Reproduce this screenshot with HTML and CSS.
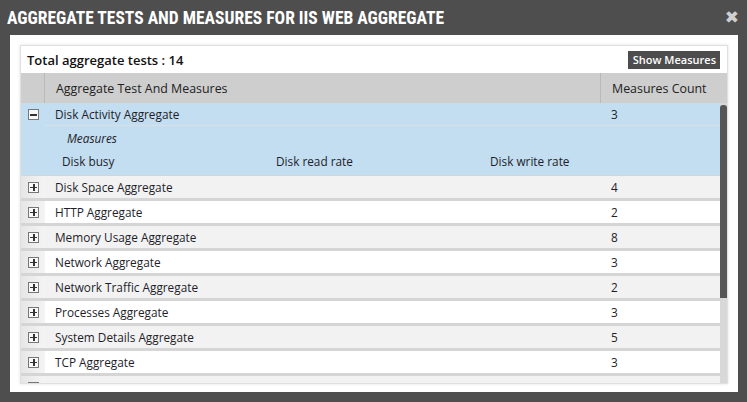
FILE: index.html
```html
<!DOCTYPE html>
<html>
<head>
<meta charset="utf-8">
<link rel="stylesheet" href="styles.css">
</head>
<body>
<div class="dialog">
  <div class="titlebar">
    <span class="title">AGGREGATE TESTS AND MEASURES FOR IIS WEB AGGREGATE</span>
    <span class="close">&#x2716;</span>
  </div>
  <div class="panel">
    <div class="box">
      <div class="toolbar">
        <span class="total">Total aggregate tests : 14</span>
        <span class="btn">Show Measures</span>
      </div>
      <div class="thead">
        <div class="c-icon"></div>
        <div class="c-name">Aggregate Test And Measures</div>
        <div class="c-count">Measures Count</div>
      </div>
      <div class="body">
        <div class="rows">
          <div class="expanded">
            <div class="row exp-head">
              <div class="c-icon"><span class="tog minus"></span></div>
              <div class="c-name">Disk Activity Aggregate</div>
              <div class="c-count">3</div>
            </div>
            <div class="measures-title">Measures</div>
            <div class="measures">
              <span>Disk busy</span>
              <span>Disk read rate</span>
              <span>Disk write rate</span>
            </div>
          </div>
          <div class="row alt"><div class="c-icon"><span class="tog plus"></span></div><div class="c-name">Disk Space Aggregate</div><div class="c-count">4</div></div>
          <div class="row"><div class="c-icon"><span class="tog plus"></span></div><div class="c-name">HTTP Aggregate</div><div class="c-count">2</div></div>
          <div class="row alt"><div class="c-icon"><span class="tog plus"></span></div><div class="c-name">Memory Usage Aggregate</div><div class="c-count">8</div></div>
          <div class="row"><div class="c-icon"><span class="tog plus"></span></div><div class="c-name">Network Aggregate</div><div class="c-count">3</div></div>
          <div class="row alt"><div class="c-icon"><span class="tog plus"></span></div><div class="c-name">Network Traffic Aggregate</div><div class="c-count">2</div></div>
          <div class="row"><div class="c-icon"><span class="tog plus"></span></div><div class="c-name">Processes Aggregate</div><div class="c-count">3</div></div>
          <div class="row alt"><div class="c-icon"><span class="tog plus"></span></div><div class="c-name">System Details Aggregate</div><div class="c-count">5</div></div>
          <div class="row"><div class="c-icon"><span class="tog plus"></span></div><div class="c-name">TCP Aggregate</div><div class="c-count">3</div></div>
          <div class="row alt"><div class="c-icon"><span class="tog plus"></span></div><div class="c-name"></div><div class="c-count"></div></div>
        </div>
        <div class="scroll"><div class="thumb"></div></div>
      </div>
    </div>
  </div>
</div>
</body>
</html>
```
FILE: styles.css
```css
* { box-sizing: border-box; }
html, body { margin: 0; padding: 0; }
body {
  width: 747px;
  height: 402px;
  background: #4e4e4e;
  font-family: "Open Sans", "DejaVu Sans", sans-serif;
  color: #1e1e2a;
  overflow: hidden;
}
.dialog { width: 747px; height: 402px; display: flex; flex-direction: column; }
.titlebar {
  height: 35px;
  display: flex;
  align-items: center;
  justify-content: space-between;
  padding: 0 8px 0 7px;
}
.title {
  font-family: "Liberation Sans Narrow", "Roboto", sans-serif;
  font-stretch: condensed;
  font-weight: bold;
  font-size: 17.5px;
  color: #ffffff;
}
.close {
  color: #d0d0d0;
  font-family: "DejaVu Sans", sans-serif;
  font-size: 17px;
  font-weight: bold;
  line-height: 1;
}
.panel {
  margin: 0 9px 0 10px;
  height: 357px;
  background: #ffffff;
  padding: 10px 10px 8px 10px;
}
.box {
  height: 339px;
  border: 1px solid #e0e0e0;
  box-shadow: 0 0 3px rgba(0,0,0,0.12);
  overflow: hidden;
  display: flex;
  flex-direction: column;
}
.toolbar {
  height: 27px;
  flex: none;
  display: flex;
  align-items: center;
  justify-content: space-between;
  padding: 0 7px 0 6px;
}
.total { font-size: 13px; font-weight: 600; color: #111; }
.btn {
  background: #4d4d4d;
  color: #ffffff;
  font-size: 11px;
  font-weight: 600;
  padding: 2px 4px 3px 5px;
  line-height: 13px;
}
.thead {
  height: 30px;
  flex: none;
  background: #cecece;
  display: flex;
  align-items: stretch;
  font-size: 12.4px;
  color: #222;
}
.thead .c-icon { width: 24px; border-right: 1px solid #b9b9b9; }
.thead .c-name { flex: 1; display: flex; align-items: center; padding-left: 11px; }
.thead .c-count { width: 127px; border-left: 1px solid #b9b9b9; display: flex; align-items: center; padding-left: 11px; }
.body { flex: 1; display: flex; min-height: 0; }
.rows { flex: 1; min-width: 0; }
.scroll { width: 7px; background: #d8d8d8; padding-top: 2px; }
.thumb { height: 193px; background: #565656; border-radius: 3px 3px 0 0; }
.row {
  height: 25px;
  display: flex;
  align-items: stretch;
  font-size: 11.8px;
  background: #ffffff;
  border-bottom: 3px solid #d5d5d5;
}
.row.alt { background: #f2f2f2; }
.row .c-icon {
  width: 24px;
  display: flex;
  align-items: center;
  justify-content: center;
  background: linear-gradient(to right, #e6e6e6, #f4f4f4);
}
.row .c-name { flex: 1; display: flex; align-items: center; padding-left: 10px; }
.row .c-count { width: 120px; display: flex; align-items: center; padding-left: 11px; }
.expanded { background: #c3ddf1; border-bottom: 1px solid #d5d5d5; }
.row.exp-head { background: transparent; height: 23px; border-bottom: none; }
.row.exp-head .c-icon { background: transparent; }
.row.exp-head .c-name { border-bottom: 1px solid #d8dfe6; }
.row.exp-head .c-count { border-bottom: 1px solid #d8dfe6; }
.tog {
  width: 11px;
  height: 11px;
  border: 1px solid #777;
  background: #f8f8f8;
  position: relative;
  display: block;
  margin-left: 1px;
}
.tog::before {
  content: "";
  position: absolute;
  left: 1px; right: 1px; top: 4px;
  height: 1.5px;
  background: #333;
}
.tog.plus::after {
  content: "";
  position: absolute;
  top: 1px; bottom: 1px; left: 4px;
  width: 1.5px;
  background: #333;
}
.measures-title {
  font-size: 11.8px;
  font-style: italic;
  padding: 4px 0 0 46px;
  height: 22px;
}
.measures {
  display: flex;
  font-size: 11.8px;
  height: 27px;
  padding: 5px 0 0 41px;
}
.measures span { width: 214px; }
```
